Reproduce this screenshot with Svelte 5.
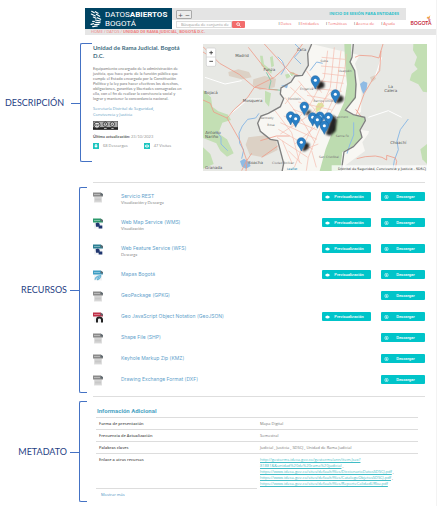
<script>
  const nav = ['Datos', 'Entidades', 'Temáticas', 'Acerca de', 'Ayuda'];

  const resources = [
    { name: 'Servicio REST', note: 'Visualización y Descarga', kind: 'file', preview: true },
    { name: 'Web Map Service (WMS)', note: 'Visualización', kind: 'wms', preview: true },
    { name: 'Web Feature Service (WFS)', note: 'Descarga', kind: 'wfs', preview: true },
    { name: 'Mapas Bogotá', kind: 'map', preview: true },
    { name: 'GeoPackage (GPKG)', kind: 'file' },
    { name: 'Geo JavaScript Object Notation (GeoJSON)', kind: 'json', preview: true },
    { name: 'Shape File (SHP)', kind: 'file' },
    { name: 'Keyhole Markup Zip (KMZ)', kind: 'file' },
    { name: 'Drawing Exchange Format (DXF)', kind: 'file' }
  ];

  const tabColor = { file: '#8b8b8b', wms: '#2c9a6c', wfs: '#2b7f93', map: '#3f9ec4', json: '#c03048' };

  const metadata = [
    ['Forma de presentación', 'Mapa Digital'],
    ['Frecuencia de Actualización', 'Semestral'],
    ['Palabras claves', 'Judicial , Justicia , SDSCJ , Unidad de Rama Judicial']
  ];

  const pins = [
    [361, 155], [421, 197], [328, 234], [287, 263], [302, 270], [353, 266],
    [375, 264], [400, 266], [367, 273], [388, 291], [319, 341]
  ];

  const places = [
    ['Madrid', 141, 60], ['Funza', 223, 100], ['Bojacá', 48, 170], ['Mosquera', 173, 195],
    ['Soacha', 182, 381], ['Antonio', 54, 290], ['Nariño', 50, 302], ['Granada', 56, 396],
    ['Cota', 320, 40], ['La', 587, 153], ['Calera', 587, 165], ['Choachí', 610, 319]
  ];
  const districts = [
    ['Engativá', 335, 157], ['Fontibón', 298, 188], ['Kennedy', 216, 246], ['Bosa', 228, 265],
    ['Suba', 388, 75], ['Usaquén', 450, 103], ['Barrios Unidos', 388, 194], ['Chapinero', 436, 243],
    ['Santa Fe', 442, 300], ['San Cristóbal', 402, 362], ['Ciudad Bolívar', 264, 380]
  ];
</script>

<div class="page">
  <header>
    <a class="brand" href="#inicio">
      <svg viewBox="0 0 36 54" aria-hidden="true" fill="none" stroke="#fff" stroke-width="3.4" stroke-linecap="round">
        <path d="M5 4l8 4M16 5l8 5M4 12l12 6M19 13l10 6M10 21l8 4M22 23l10 5M16 30l15 3M8 34l5 1M17 37l13 1M3 43l8-2M14 44l13-1M8 50l14-2" />
      </svg>
      <span>DATOS<b>ABIERTOS</b><br />BOGOTÁ</span>
    </a>
    <div class="tools">
      <div class="session">
        <div class="zoomers">
          <button aria-label="Aumentar texto">+</button><button aria-label="Reducir texto">−</button>
        </div>
        <a href="#sesion">INICIO DE SESIÓN PARA ENTIDADES</a>
      </div>
      <div class="searchrow">
        <form>
          <input aria-label="Búsqueda" placeholder="Búsqueda de conjunto de" />
          <button type="button" aria-label="Buscar">
            <svg viewBox="0 0 10 10" fill="none" stroke="#fff" stroke-width="1.6"><circle cx="4.2" cy="4.2" r="2.8" /><path d="M6.3 6.3l3 3" /></svg>
          </button>
        </form>
        <nav>
          {#each nav as item}<a href="#menu"><i>I</i>{item}</a>{/each}
        </nav>
      </div>
    </div>
    <div class="city">
      <svg viewBox="0 0 24 14" aria-hidden="true">
        <path d="M13 7l4-4 1 2 4-5-1 6-5 3z" fill="#f6b443" />
        <path d="M17 6l4 8M20 6l-2 8" stroke="#c5283a" stroke-width="1" fill="none" />
      </svg>
      <b>BOGOTÁ</b>
    </div>
  </header>
  <div class="crumbs"><a href="#home">HOME</a> / <a href="#datos">DATOS</a> / <b>UNIDAD DE RAMA JUDICIAL, BOGOTÁ D.C.</b></div>

  <section class="description">
    <div class="label">DESCRIPCIÓN</div>
    <div class="brace"></div>
    <div class="overview">
      <div class="info">
        <h1>Unidad de Rama Judicial. Bogotá D.C.</h1>
        <p>Equipamiento encargado de la administración de<br />justicia, que hace parte de la función pública que<br />cumple el Estado encargada por la Constitución<br />Política y la ley para hacer efectivos los derechos,<br />obligaciones, garantías y libertades consagradas en<br />ella, con el fin de realizar la convivencia social y<br />lograr y mantener la concordancia nacional.</p>
        <a class="owner" href="#entidad">Secretaría Distrital de Seguridad,<br />Convivencia y Justicia</a>
        <svg class="cc" viewBox="0 0 75 26" role="img" aria-label="Licencia Creative Commons">
          <path d="M0 0h75v26H0z" fill="#222" /><path d="M1 1h73v17H1z" fill="#aaa" />
          <g fill="#eee" stroke="#222" stroke-width="2.4"><circle cx="12" cy="12" r="9" /><circle cx="37" cy="9" r="6.5" /><circle cx="58" cy="9" r="6.5" /></g>
          <path d="M11 10q-4-2-4 2t4 2M17 10q-4-2-4 2t4 2M37 5v8M34 8h6M55 9h6M58 7v5" fill="none" stroke="#222" stroke-width="1.8" />
          <path d="M33 22h8M55 22h7" stroke="#fff" stroke-width="2" />
        </svg>
        <div class="updated"><b>Última actualización:</b> 23/10/2023</div>
        <div class="stats">
          <span><svg viewBox="0 0 18 18"><path d="M0 0h18v18H0z" fill="#1dc5bf" /><path d="M7 3h4v5h4l-6 6-6-6h4z" fill="#fff" /></svg>68 Descargas</span>
          <span><svg viewBox="0 0 18 18"><path d="M0 0h18v18H0z" fill="#1dc5bf" /><path d="M2 9q7-9 14 0-7 9-14 0z" fill="#fff" /><circle cx="9" cy="9" r="2.5" fill="#1dc5bf" /></svg>47 Visitas</span>
        </div>
      </div>

      <svg class="map" viewBox="24 20 672 381" preserveAspectRatio="xMidYMid slice" role="img" aria-label="Mapa de Bogotá">
        <path d="M24 20h672v381H24z" fill="#e7e8e4" />
        <g fill="#c3dfb4">
          <path d="M24 158l24 22 4 28 18 14 30 10 8 16-26 8-12 32 26 18 20 42-20 10-20-18-12-22-40-16z" />
          <path d="M24 330l22 20 10 30-32 14z" />
          <path d="M195 55l8 0 4 26 24 20-2 8-30-24zM210 160l18 8-6 40-12-14zM225 60l8-4 4 30-8 4zM270 112l25-8 6 6-26 14z" />
          <path d="M655 20h41v145l-12-2-14-22-26-12 6-20 18-14-10-12 8-24-12-20z" />
          <path d="M696 320l-20 16 6 30 14 14z" />
        </g>
        <g fill="#dcd1c5">
          <path d="M100 104l30-8 32 8 8 16-30 6-38-10zM175 126l34-10 34 8-4 26-44 8-22-14zM160 300l50-6 34 14 4 30-44 22-40-8-12-30z" />
          <path d="M525 120l14-6 4 10-12 10z" />
        </g>
        <path d="M350 20L338 48l2 36-18 30-22 2-12 18-30 18-2 18 10 14-10 24-36 20-22 8-10 22 8 24 30 24 22 4 18 68-8 41h182l10-34 32-24 28-20-8-26 18-26 2-8-30-4-4-14-26-6 36-34 2-56-14-68-6-20 14-25z" fill="#f8f7f3" />
        <path d="M448 20h20l0 54 10 26 6 44-2 40-34 34 24 14 36 8 2 8-16 28 6 26-26 24-32 18-6 57h-62l18-66 18-46 16-46 22-50 8-52-6-66z" fill="#bddcb0" />
        <path d="M362 208l8-12 12 0 6 10-10 8-14 12z" fill="#dbe79c" />
        <g fill="none" stroke="#fff" stroke-width="3">
          <path d="M30 120l60 20 50-10M100 235l60-50 40 0M250 60l40 60M520 240l60-20 40 20M560 60l-20 60" />
        </g>
        <g fill="none" stroke="#8fbbe4" stroke-width="3">
          <path d="M300 20l18 18-20 22 20 20M248 58l14 14 8 20-12 20M192 228l-10 14-24 4-16 20-10 22 2 30 12 20-6 26M64 282l14 18 0 20 20 20" />
          <path d="M640 245l-24 32-10 34 4 26-12 32-4 26M345 100l20-26 18 4M476 255l0 38-12 30-8 26" />
          <path d="M214 105l14 26-6 24 36 4" stroke="#86c9ac" />
        </g>
        <path d="M135 372l12-8 14 10 6 12-14 8-12-6zM495 140l10-8 12 4-2 20-10 14-6-14zM258 145l22-6-4 14z" fill="#8fbbe4" />
        <g fill="none" stroke="#ef9a88" stroke-width="2.4">
          <path d="M24 28l50 50 60 34 44 38 60-30 36-32 50-70M208 20l76 84 26 10M178 150l-20 30-40 36-22 26 40 70 20 60-4 38M178 150l40 6 30 2M24 188l22 10 10 26 40 18M24 44l22 14M200 360l48-34M196 310l48-14 40 0M160 30l74 94M170 348l-16 24-14 28" />
          <path d="M480 60l14-6 36 2 22 6 6-22 6-20M558 40l-4 60-22 28-24 40-24 64M485 364l26-6 30-2 20 4 14 8 0-14 26 8 4 10-4 22M500 240l-18-24" />
        </g>
        <g fill="none" stroke="#f5bbae" stroke-width="2">
          <path d="M398 40l-10 80-42 80-60 70-30 20M418 30l-12 120-36 80-52 110-20 50M438 40l-16 130-38 80-44 110-6 40M454 50l-6 60-20 80-34 60M380 60l70 6M378 86l72 6M382 108l70 8M366 130l80 8M350 152l90 10M336 174l90 16M310 194l100 24M294 216l90 34M266 236l100 42M256 256l110 50M250 276l104 60M246 300l92 60M286 150l70 62 30 60M310 130l50 60M334 100l46 66M270 180l56 76 34 60M240 220l50 66 24 90M288 270l60-40 60-66M300 320l60-50M280 340l40 40M262 310l30 70M320 140l-50 60M350 340l14 50M370 320l-50 20" />
        </g>
        <path d="M350 20L338 48l2 36-18 30-22 2-12 18-30 18-2 18 10 14-10 24-36 20-22 8-10 22 8 24 30 24 22 4 18 68-8 41M475 20l-4 40-6 14 14 26 4 40-2 40-30 38 24 14 34 8 2 10-16 28 6 22-26 28-28 16-8 57" fill="none" stroke="#808080" stroke-width="4" />
        <g class="place">
          {#each places as [name, x, y]}<text {x} {y}>{name}</text>{/each}
        </g>
        <g class="district">
          {#each districts as [name, x, y]}<text {x} {y}>{name}</text>{/each}
        </g>
        <defs>
          <filter id="shade" x="-40%" y="-40%" width="180%" height="180%"><feGaussianBlur stdDeviation="2.5" /></filter>
        </defs>
        <g fill="#000" opacity=".85" filter="url(#shade)">
          <path d="M362 154l12-24 14 6 0 14-16 6zM422 196l12-24 12 8-2 12-14 6zM330 232l10-14 10 4-10 10zM322 340l8-26 14 6-4 14-12 8zM392 291l20-58 14 12-4 36-16 14z" />
        </g>
        {#each pins as [x, y]}
          <g transform="translate({x} {y})">
            <path d="M0 0C-3-10-13-17-13-27a13 13 0 0 1 26 0C13-17 3-10 0 0z" fill="#2a7fc5" stroke="#1d629f" stroke-width="1.5" />
            <circle cy="-26" r="4.6" fill="#fff" />
          </g>
        {/each}
        <rect x="34" y="32" width="28" height="55" rx="4" fill="#fff" stroke="#ccc" stroke-width="2" />
        <path d="M34 59h28" stroke="#ccc" stroke-width="2" />
        <path d="M43 46h11M48.500 40.500v11M43 72h11" stroke="#333" stroke-width="2.500" />
        <path d="M410 384h286v17H410z" fill="#fff" opacity=".75" />
        <text class="leaflet" x="276" y="397">Leaflet</text>
        <text class="credit" x="693" y="397">Distrital de Seguridad, Convivencia y Justicia - SDSCJ</text>
      </svg>
    </div>
  </section>

  <hr />

  <section class="resources">
    <div class="label">RECURSOS</div>
    <div class="brace"></div>
    <ul>
      {#each resources as r}
        <li class:noted={r.note}>
          <svg class="type" viewBox="0 0 30 32" aria-hidden="true">
            <path d="M3 10h24v21H3z" fill={r.kind === 'file' ? '#dedede' : '#f1f3f5'} />
            <path d="M0 1h23l7 5v7H0z" fill={tabColor[r.kind]} />
            <path d="M23 1l7 5v4h-7z" fill="#606a70" />
            <path d="M4 7h4M10 7h4M16 7h4" stroke="#fff" stroke-width="2.500" opacity=".7" />
            {#if r.kind === 'file'}
              <path d="M6 18h18M6 22h18M6 26h18" stroke="#bdbdbd" stroke-width="2" />
            {:else if r.kind === 'map'}
              <path d="M6 29q0-12 18-13-2 13-12 13l5-8" fill="#8cc8e6" stroke="#3f9ec4" stroke-width="2" />
            {:else if r.kind === 'json'}
              <path d="M12 31V22q0-6 7-6t8 6v9" fill="none" stroke="#222" stroke-width="6" />
            {:else}
              <path d="M8 15l7-2 5 4v5h8v9H17v-5H9z" fill="#20366f" />
            {/if}
          </svg>
          <div class="name"><a href="#recurso">{r.name}</a>{#if r.note}<small>{r.note}</small>{/if}</div>
          {#if r.preview}
            <button class="preview">
              <svg viewBox="0 0 14 10"><path d="M0 5q7-9 14 0-7 9-14 0z" fill="#fff" /></svg><span>Previsualización</span>
            </button>
          {/if}
          <button class="download">
            <svg viewBox="0 0 14 14" fill="none" stroke="#fff" stroke-width="2"><circle cx="7" cy="7" r="6" /><path d="M7 3v7M4 7l3 3 3-3" /></svg><span>Descargar</span>
          </button>
        </li>
      {/each}
    </ul>
  </section>

  <hr />

  <section class="metadata">
    <div class="label">METADATO</div>
    <div class="brace"></div>
    <div class="extra">
      <h2>Información Adicional</h2>
      <table>
        <tbody>
          {#each metadata as [key, value]}
            <tr><th scope="row">{key}</th><td>{value}</td></tr>
          {/each}
          <tr class="links">
            <th scope="row">Enlace a otros recursos</th>
            <td>
              <a href="#r1">http://gestorms.ideca.gov.co/gestorms/ann/item.Jsex?<br />81881&amp;&amp;unidad%20de%20rama%20judicial</a> ,<br />
              <a href="#r2">https://www.ideca.gov.co/sites/default/files/DiccionarioDatosSDSCJ.pdf</a> ,<br />
              <a href="#r3">https://www.ideca.gov.co/sites/default/files/CatalogoObjetosSDSCJ.pdf</a> ,<br />
              <a href="#r4">https://www.ideca.gov.co/sites/default/files/ReporteCalidadURku.pdf</a>
            </td>
          </tr>
        </tbody>
      </table>
      <a class="more" href="#mas">Mostrar más</a>
    </div>
  </section>
</div>

<style>
  :global(body) { background: #fff; }
  .page {
    box-sizing: border-box;
    padding: 8px 0 4px;
    border-right: 1px solid #f3f3f3;
    font-family: "Open Sans", Roboto, sans-serif;
    font-size: 4px;
    line-height: 5px;
    color: #777;
    background: #fff;
  }
  a { color: inherit; text-decoration: none; }
  button, input { font: inherit; margin: 0; padding: 0; border: 0; }
  svg { display: block; }

  header { display: flex; height: 21px; margin-left: 85px; }
  .brand { display: flex; align-items: center; gap: 3px; width: 87px; padding-left: 5px; box-sizing: border-box; background: #004463; color: #fff; font: 8px/9px Roboto, sans-serif; white-space: nowrap; }
  .brand svg { width: 12px; height: 18px; flex: none; }
  .tools { flex: 1; min-width: 0; }
  .session { display: flex; justify-content: space-between; align-items: center; height: 12px; padding: 0 7px 0 4px; background: #e4e4e4; }
  .session a { color: #2bbfca; font-weight: 700; padding-bottom: 2px; }
  .zoomers { display: flex; border: 1px solid #aaa; border-radius: 1px; }
  .zoomers button { width: 7px; height: 7px; background: #ececec; color: #555; font-size: 8px; line-height: 7px; }
  .searchrow { display: flex; justify-content: space-between; align-items: center; height: 9px; padding: 0 11px 0 4px; }
  form { display: flex; height: 7px; }
  input { box-sizing: border-box; width: 56px; padding-left: 4px; border: 1px solid #ddd; background: #fff; color: #999; }
  input::placeholder { color: #999; opacity: 1; }
  form button { display: grid; place-items: center; width: 13px; background: #f26d6d; border-radius: 1px; }
  form svg { width: 5px; height: 5px; }
  nav { display: flex; gap: 7px; color: #f07070; padding-bottom: 2px; }
  nav i { color: #444; font-style: normal; margin-right: 1px; }
  .city { display: flex; flex-direction: column; align-items: center; width: 30px; padding-top: 7px; color: #c5283a; font: 5px/4px Lato, sans-serif; }
  .city svg { width: 20px; height: 6px; align-self: flex-end; }
  .crumbs { margin-left: 85px; padding: 0 6px; height: 6px; line-height: 6px; background: #e6e6e6; color: #f07f7f; }

  section { display: grid; grid-template-columns: 67px 25px 1fr; }
  .label { align-self: center; text-align: right; color: #1f4184; font: 9px/12px Lato, sans-serif; }
  .brace { position: relative; margin-left: 13px; border: 1px solid #4472c4; border-right: 0; border-radius: 2px 0 0 2px; }
  .brace::before { content: ""; position: absolute; left: -10px; top: 50%; width: 10px; height: 1px; background: #4472c4; }
  hr { height: 1px; margin: 0 11px 0 93px; border: 0; background: #dedede; }

  .description { margin: 8px 0 11px; }
  .description .label, .description .brace { margin-bottom: 9px; }
  .description .label { padding-right: 3px; }
  .overview { display: flex; gap: 10px; padding: 1px 9px 0 1px; }
  .info { flex: 0 0 100px; }
  h1 { margin: 0 12px 6px 0; font: 700 6px/8px Lato, sans-serif; color: #3f6d7f; }
  p { margin: 0 0 5px; font-family: Lato, sans-serif; white-space: nowrap; }
  .owner { display: block; color: #5f9dc4; line-height: 6px; }
  .cc { width: 25px; height: 9px; margin: 3px 0 4px; }
  .updated { font-family: Lato, sans-serif; color: #999; }
  .updated b { color: #555; }
  .stats { display: flex; gap: 16px; margin-top: 4px; line-height: 6px; color: #888; }
  .stats span { display: flex; gap: 4px; }
  .stats svg { width: 6px; height: 6px; }
  .map { flex: 1; min-width: 0; height: 127px; font-family: "DejaVu Sans", sans-serif; }
  .place text { font-size: 12px; fill: #555; text-anchor: middle; }
  .district text { font-size: 9px; fill: #777; text-anchor: middle; }
  .leaflet { font-size: 9px; fill: #0078a8; }
  .credit { font-size: 10px; fill: #333; text-anchor: end; }

  .resources { margin-top: 4px; }
  .resources .label, .resources .brace { margin-bottom: 3px; }
  .resources .brace, .metadata .brace { margin-left: 12px; margin-right: 5px; }
  ul { margin: 0; padding: 5px 11px 0 1px; list-style: none; }
  li { display: flex; align-items: flex-start; height: 21px; }
  .noted { height: 26px; }
  .type { width: 10px; height: 11px; }
  .name { flex: 1; padding-left: 18px; }
  .name a { display: block; color: #5f9fcb; font: 5px/8px Inter, sans-serif; }
  small { display: block; font: 4px/5px Lato, sans-serif; color: #888; }
  li button { display: flex; align-items: center; height: 9px; padding: 0 3px; border-radius: 1px; background: #00c4c9; color: #fff; font-family: Roboto, sans-serif; font-weight: 500; }
  li button svg { width: 5px; height: 4px; }
  li button span { flex: 1; text-align: center; }
  .preview { width: 49px; }
  .download { width: 44px; margin-left: 10px; }

  .metadata { margin-top: 4px; }
  .extra { padding: 6px 18px 0 4px; }
  h2 { margin: 0 0 2px 1px; font: 700 6px/8px Roboto, sans-serif; color: #4ba3c3; }
  table { width: 100%; border-collapse: separate; border-spacing: 0; table-layout: fixed; }
  th, td { box-sizing: border-box; height: 12px; padding: 0 3px; border-top: 1px solid #ddd; text-align: left; line-height: 6px; }
  th { width: 50%; color: #555; font-weight: 600; }
  .links th, .links td { height: 36px; vertical-align: top; padding-top: 3px; white-space: nowrap; }
  .links th { border-bottom: 1px solid #ddd; }
  td a { color: #3fbcc6; text-decoration: underline; }
  .more { display: block; margin: 3px 0 0 5px; line-height: 6px; padding-bottom: 4px; color: #4b93c4; }
</style>
